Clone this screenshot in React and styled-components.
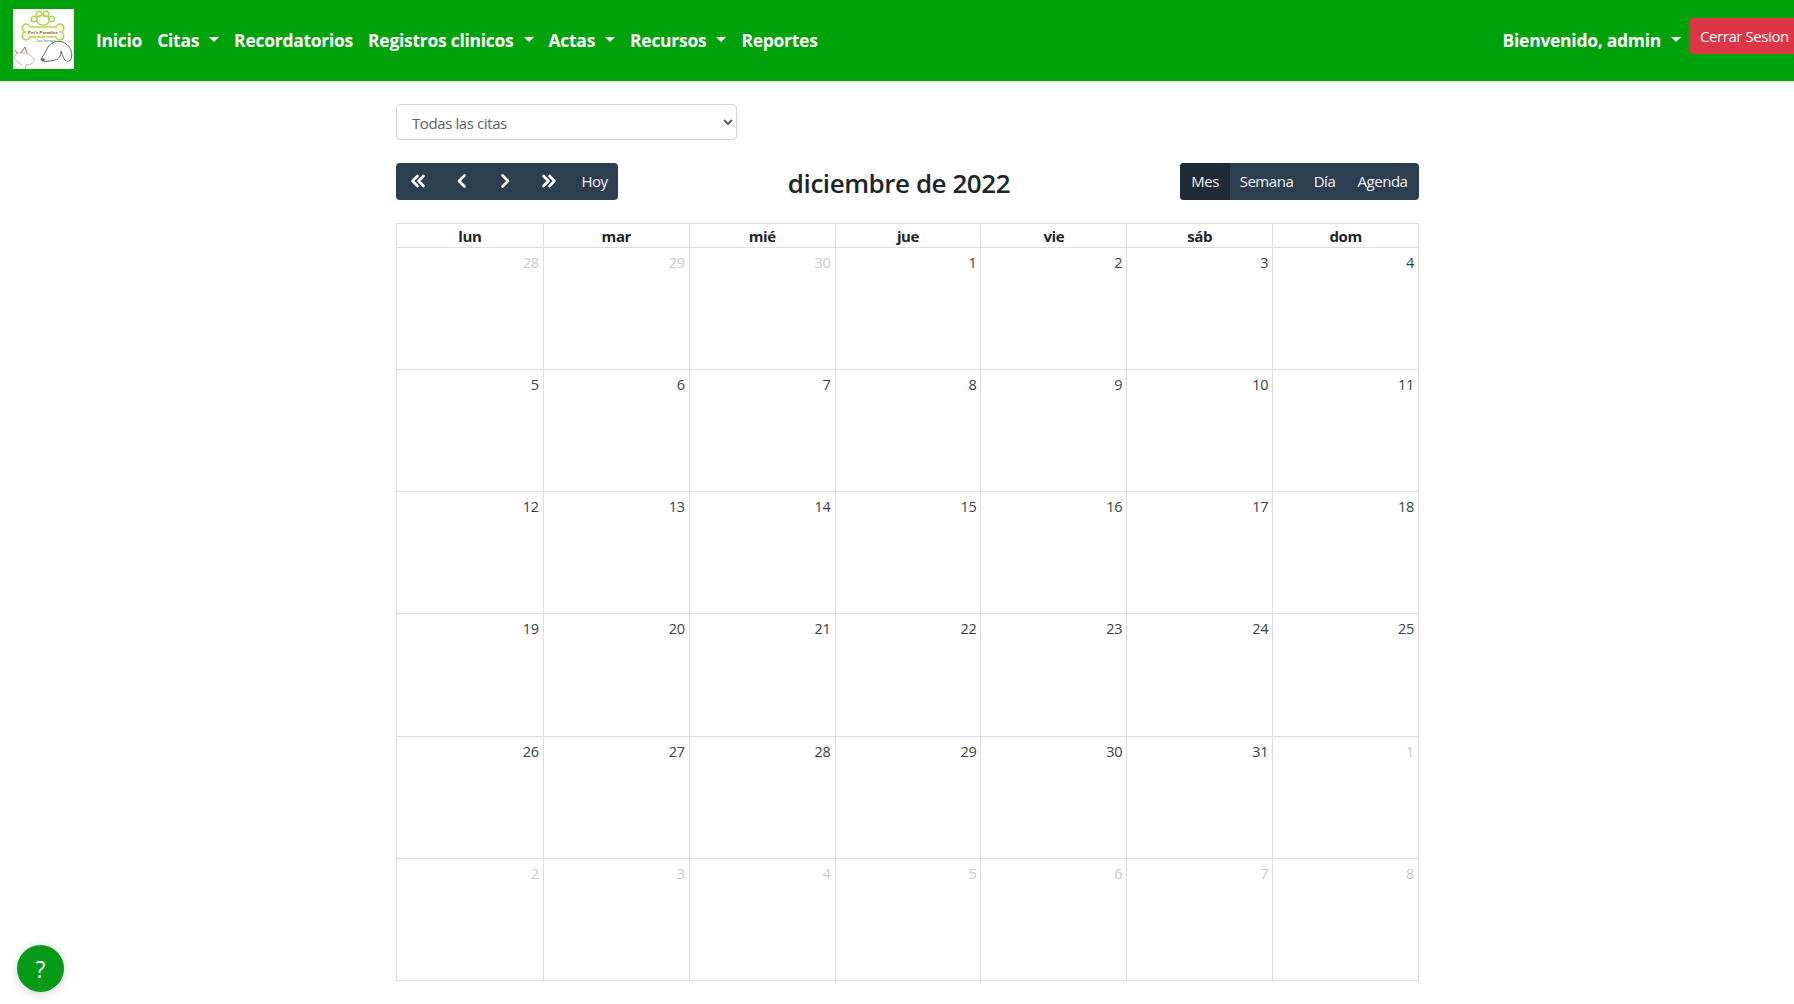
import React from "react";
import styled, { createGlobalStyle } from "styled-components";

const Global = createGlobalStyle`
  html, body { margin: 0; padding: 0; background: #fff; height: 100%; overflow: hidden; }
  body { font-family: "Open Sans", "Noto Sans", "Liberation Sans", sans-serif; color: #212529; font-size: 15px; }
  * { box-sizing: border-box; }
`;
const Page = styled.div`height: 1004px; width: 1794px; overflow: hidden; position: relative;`;
const Header = styled.header`
  height: 82px; background: #00a20c; border-bottom: 1px solid #dff3e0;
  display: flex; align-items: flex-start; padding: 9px 0 0 13px; 
`;
const Logo = styled.svg`width: 61px; height: 60px; background: #fff; flex: none; display: block;`;
const Nav = styled.nav`display: flex; align-items: center; margin-left: 22px; height: 60px; gap: 15px;`;
const NavLink = styled.a`
  color: #fff; font-weight: 700; font-size: 17.5px; letter-spacing: -0.28px; display: inline-flex; align-items: center; white-space: nowrap; padding-top: 1px;
  ${p => p.$caret && `&::after { content: ""; margin-left: 10px; border-top: 5px solid #fff; border-left: 5px solid transparent; border-right: 5px solid transparent; }`}
`;
const Right = styled.div`margin-left: auto; display: flex; align-items: flex-start; gap: 8px; flex: none; margin-right: -2px;`;
const User = styled(NavLink)`height: 60px;`;
const Logout = styled.button`
  background: #dc3545; color: #fff; border: 0; border-radius: 4px 0 0 4px; height: 36px; margin-top: 9px; width: 107px; padding: 0 0 0 11px; text-align: left;
  font: 400 15px "Open Sans", sans-serif; letter-spacing: -0.42px; white-space: nowrap; flex: none;
`;
const Main = styled.main`width: 1023px; margin-left: 396px; padding-top: 22px;`;
const Select = styled.select`
  width: 341px; height: 36px; display: block; padding: 1px 11px 0; border: 1px solid #ced4da; border-radius: 4px; background: #fff; color: #5a6066;
  font: 400 15px "Open Sans", sans-serif; letter-spacing: -0.4px;
`;
const Toolbar = styled.div`display: flex; align-items: center; justify-content: space-between; margin-top: 23px; height: 37px;`;
const Group = styled.div`display: flex; height: 37px; background: #2c3e50; border-radius: 4px; overflow: hidden; color: #fff;`;
const Btn = styled.button`
  background: ${p => (p.$active ? "#1e2b37" : "transparent")}; border: 0; color: #f2f4f6; height: 37px; padding: 0 0 2px; width: ${p => p.$w}px; display: flex; align-items: center; justify-content: center;
  font: 400 15px "Open Sans", sans-serif; letter-spacing: -0.45px;
`;
const Title = styled.h2`
  margin: 3px 0 0 0; font-weight: 600; font-size: 26px; letter-spacing: -0.45px; color: #212529;
`;
const Calendar = styled.div`margin-top: 23px; border: 1px solid #ddd; display: grid; grid-template-columns: repeat(7, 1fr); height: 758px; grid-template-rows: 23px repeat(6, 1fr);`;
const DayHead = styled.div`
  font-weight: 700; font-size: 15px; letter-spacing: -0.4px; text-align: center; line-height: 24px; border-left: ${p => (p.$first ? 0 : "1px solid #ddd")}; color: #212529;
`;
const Cell = styled.div`
  text-align: right; padding: 4px 4px 0 0; font-size: 14.5px; letter-spacing: -0.3px; line-height: 21px;
  color: ${p => (p.$off ? "#c8cbcd" : "#3a3f44")};
  border-left: ${p => (p.$first ? 0 : "1px solid #ddd")}; border-top: 1px solid #ddd;
`;
const Help = styled.button`
  position: absolute; left: 17px; top: 945px; width: 47px; height: 47px; border-radius: 50%; border: 0; background: #069b17; color: #fff;
  font: 400 23px "Open Sans", sans-serif; box-shadow: 0 2px 10px rgba(0,0,0,.18); display: flex; align-items: center; justify-content: center; padding: 0;
`;

const Chevron = ({ dir, double }) => (
  <svg width="18" height="18" viewBox="0 0 18 18" fill="none" stroke="#fff" strokeWidth="2.6" strokeLinecap="round" strokeLinejoin="round">
    {double ? (
      dir === "left" ? (<><path d="M8.5 4 L3.5 9 L8.5 14" /><path d="M14.5 4 L9.5 9 L14.5 14" /></>) : (<><path d="M3.5 4 L8.5 9 L3.5 14" /><path d="M9.5 4 L14.5 9 L9.5 14" /></>)
    ) : dir === "left" ? (<path d="M11.5 3.5 L6 9 L11.5 14.5" />) : (<path d="M6.5 3.5 L12 9 L6.5 14.5" />)}
  </svg>
);

const LogoArt = () => (
  <Logo viewBox="0 0 61 60">
    <g fill="none" stroke="#b5d55f" strokeWidth="1.6">
      <ellipse cx="30" cy="11" rx="6.5" ry="5" />
      <circle cx="21" cy="10" r="2.8" /><circle cx="26" cy="5" r="2.8" /><circle cx="33" cy="5" r="2.8" /><circle cx="38.5" cy="10" r="2.8" />
      <path d="M17 18 a4 4 0 1 0 -5 5 a4 4 0 1 0 5 5 h26 a4 4 0 1 0 5 -5 a4 4 0 1 0 -5 -5 z" fill="#fdfde8" />
    </g>
    <text x="30" y="25" fontSize="4.4" fontWeight="700" textAnchor="middle" fill="#8a5a2b" fontFamily="Liberation Sans">Pet's Paradise</text>
    <text x="33" y="33" fontSize="2.6" textAnchor="middle" fill="#666" fontFamily="Liberation Sans">Clinic Veterinaria</text>
    <g fill="none" stroke="#55555f" strokeWidth=".9">
      <path d="M28.5 49 C31 46 33 42 35 38 C39 32 47 31 52 34 C58 38 60 45 58 50 C57 53 54 53 52 51 C50 48 49 45 48 42 C48 47 46 50 42 51 C38 52 33 53 30 52 C28 51.5 27.5 50 28.5 49Z" />
      <path d="M28.5 50 l3 1" strokeWidth="2" />
    </g>
    <g fill="none" stroke="#c9a49a" strokeWidth=".9">
      <path d="M1 48 L4 44 L8 44 C12 43 18 46 21 50 C22 53 18 56 13 56 L12 60" />
      <path d="M1 48 C3 52 6 54 9 56" />
      <path d="M8 44 L12 38 L14 44" stroke="#a25a45" />
      <path d="M4 44 L2 41" stroke="#a25a45" />
    </g>
  </Logo>
);

const days = ["lun", "mar", "mié", "jue", "vie", "sáb", "dom"];
const off = (w, d) => (w === 0 && d < 3) || (w === 4 && d === 6) || w === 5;
const nums = [];
const seq = [28, 29, 30, ...Array.from({ length: 31 }, (_, i) => i + 1), 1, 2, 3, 4, 5, 6, 7, 8];
for (let w = 0; w < 6; w++) nums.push(seq.slice(w * 7, w * 7 + 7));

export default function App() {
  return (
    <Page>
      <Global />
      <Header>
        <LogoArt />
        <Nav>
          <NavLink>Inicio</NavLink>
          <NavLink $caret>Citas</NavLink>
          <NavLink>Recordatorios</NavLink>
          <NavLink $caret>Registros clinicos</NavLink>
          <NavLink $caret>Actas</NavLink>
          <NavLink $caret>Recursos</NavLink>
          <NavLink>Reportes</NavLink>
        </Nav>
        <Right>
          <User $caret>Bienvenido, admin</User>
          <Logout>Cerrar Sesion</Logout>
        </Right>
      </Header>
      <Main>
        <Select defaultValue="todas"><option value="todas">Todas las citas</option></Select>
        <Toolbar>
          <Group>
            <Btn $w={44}><Chevron dir="left" double /></Btn>
            <Btn $w={43}><Chevron dir="left" /></Btn>
            <Btn $w={43}><Chevron dir="right" /></Btn>
            <Btn $w={45}><Chevron dir="right" double /></Btn>
            <Btn $w={47}>Hoy</Btn>
          </Group>
          <Title>diciembre de 2022</Title>
          <Group>
            <Btn $active $w={50}>Mes</Btn>
            <Btn $w={73}>Semana</Btn>
            <Btn $w={43}>Día</Btn>
            <Btn $w={73}>Agenda</Btn>
          </Group>
        </Toolbar>
        <Calendar>
          {days.map((d, i) => <DayHead key={d} $first={i === 0}>{d}</DayHead>)}
          {nums.map((row, w) => row.map((n, d) => (
            <Cell key={`${w}-${d}`} $first={d === 0} $off={off(w, d)}>{n}</Cell>
          )))}
        </Calendar>
      </Main>
      <Help aria-label="Ayuda">?</Help>
    </Page>
  );
}
